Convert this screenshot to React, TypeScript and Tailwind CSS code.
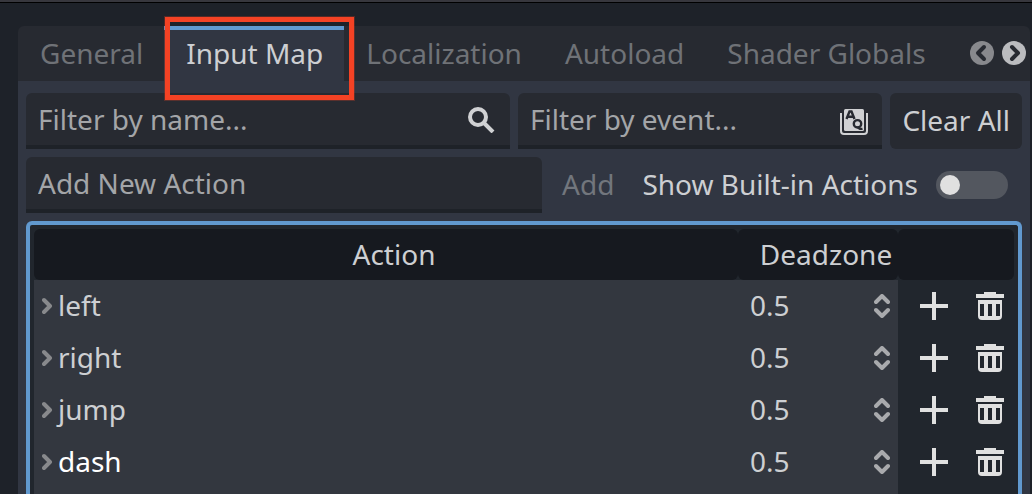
import { useState } from "react";

const tabs = ["General", "Input Map", "Localization", "Autoload", "Shader Globals"];

const actions = [
  { name: "left", deadzone: "0.5" },
  { name: "right", deadzone: "0.5" },
  { name: "jump", deadzone: "0.5" },
  { name: "dash", deadzone: "0.5", active: true },
];

function ArrowIcon({ back = false }: { back?: boolean }) {
  return (
    <svg width="24" height="24" viewBox="0 0 24 24" aria-hidden="true">
      <circle cx="12" cy="12" r="12" fill="currentColor" />
      <path
        d={back ? "M14 6 8 12l6 6" : "M10 6l6 6-6 6"}
        fill="none"
        stroke="#272a31"
        strokeWidth="4"
        strokeLinecap="round"
        strokeLinejoin="round"
      />
    </svg>
  );
}

function SearchIcon() {
  return (
    <svg width="28" height="28" viewBox="0 0 28 28" fill="none" stroke="#d0d1d3" aria-hidden="true">
      <circle cx="10" cy="12" r="8" strokeWidth="4" />
      <path d="M16 18l9 9" strokeWidth="4" />
    </svg>
  );
}

function KeyMatchIcon() {
  return (
    <svg width="28" height="32" viewBox="0 0 28 32" fill="none" aria-hidden="true">
      <path d="M1 10v18a3 3 0 0 0 3 3h20a3 3 0 0 0 3-3V10" stroke="#d0d1d3" strokeWidth="2" />
      <rect x="4" y="6" width="20" height="22" rx="1.500" fill="#d0d1d3" />
      <path d="M6.500 16l3-7.500h2l3 7.500M8 13.800h5" stroke="#272a31" strokeWidth="2.400" />
      <circle cx="17.500" cy="20.800" r="3.700" stroke="#272a31" strokeWidth="2.400" />
      <path d="M17.500 23.500c1 2.300 2.500 2.800 5 2.300" stroke="#272a31" strokeWidth="2.200" />
    </svg>
  );
}

function ChevronIcon() {
  return (
    <svg width="12" height="18" viewBox="0 0 12 18" className="shrink-0" aria-hidden="true">
      <path
        d="M2 3l6 6-6 6"
        fill="none"
        stroke="#88898c"
        strokeWidth="4"
        strokeLinecap="round"
        strokeLinejoin="round"
      />
    </svg>
  );
}

function UpDownIcon() {
  return (
    <svg width="16" height="24" viewBox="0 0 16 24" aria-hidden="true">
      <path
        d="M2 8l6-6 6 6M2 16l6 6 6-6"
        fill="none"
        stroke="#a9aaad"
        strokeWidth="4"
        strokeLinecap="round"
        strokeLinejoin="round"
      />
    </svg>
  );
}

function PlusIcon() {
  return (
    <svg width="28" height="28" viewBox="0 0 28 28" fill="#e0e0e0" aria-hidden="true">
      <path d="M12 0h4v12h12v4H16v12h-4V16H0v-4h12z" />
    </svg>
  );
}

function TrashIcon() {
  return (
    <svg width="28" height="28" viewBox="0 0 28 28" fill="#e0e0e0" aria-hidden="true">
      <path d="M8 0h12v2h8v4H0V2h8z" />
      <path
        fillRule="evenodd"
        d="M2 8h24v16a4 4 0 0 1-4 4H6a4 4 0 0 1-4-4zM4 12v12h4V12zM12 12v12h4V12zM20 12v12h4V12z"
      />
    </svg>
  );
}

const field =
  "flex h-14 min-w-0 items-center rounded-t-md border-b-4 border-[#1e2228] bg-[#272a31] pr-3.5 pl-3";
const fieldInput =
  "w-full min-w-0 flex-1 bg-transparent text-[#cdcfd2] outline-none placeholder:text-[#a3a5a8]";

export default function App() {
  const [active, setActive] = useState("Input Map");
  const [showBuiltIn, setShowBuiltIn] = useState(false);

  return (
    <main className="flex h-screen flex-col overflow-hidden border-t-2 border-[#37373d] bg-[#1e2229] font-['Noto_Sans',sans-serif] text-[28px] leading-9 text-[#cdcfd2]">
      <div className="h-px shrink-0 bg-black" />
      <div className="mt-[23px] mr-0.5 ml-[18px] flex min-h-0 flex-1 flex-col">
        <nav className="flex h-[55px] shrink-0 items-stretch rounded-t-md bg-[#272a31]" role="tablist">
          {tabs.map((tab) => (
            <div key={tab} className="relative flex">
              <button
                type="button"
                role="tab"
                aria-selected={tab === active}
                onClick={() => setActive(tab)}
                className={
                  tab === active
                    ? "border-t-4 border-[#6199cf] bg-[#313642] pr-[21px] pb-1.5 pl-[22px] whitespace-nowrap"
                    : "pr-[21px] pb-0.5 pl-[22px] whitespace-nowrap text-[#6f7277]"
                }
              >
                {tab}
              </button>
              {tab === "Input Map" && (
                <span className="pointer-events-none absolute -top-[9px] -right-2.5 -bottom-[19px] left-px border-[5px] border-[#f44224] outline outline-[#f4422440]" />
              )}
            </div>
          ))}
          <div className="ml-auto flex items-center gap-2 pr-1 pb-0.5">
            <button type="button" aria-label="Previous tabs" className="text-[#88898d]">
              <ArrowIcon back />
            </button>
            <button type="button" aria-label="Next tabs" className="text-[#bbbcbf]">
              <ArrowIcon />
            </button>
          </div>
        </nav>

        <section className="flex min-h-0 flex-1 flex-col gap-2 bg-[#313642] px-2 pt-3">
          <div className="flex shrink-0 gap-2">
            <label className={`${field} flex-[23]`}>
              <input aria-label="Filter by name" placeholder="Filter by name..." className={fieldInput} />
              <SearchIcon />
            </label>
            <label className={`${field} flex-[17]`}>
              <input aria-label="Filter by event" placeholder="Filter by event..." className={fieldInput} />
              <KeyMatchIcon />
            </label>
            <button type="button" className="h-14 rounded-md bg-[#272a31] px-3 pb-0.5 whitespace-nowrap">
              Clear All
            </button>
          </div>

          <div className="flex shrink-0 gap-2">
            <label className={`${field} flex-1`}>
              <input aria-label="Add New Action" placeholder="Add New Action" className={fieldInput} />
            </label>
            <button type="button" disabled className="px-3 pb-0.5 text-[#72767d]">
              Add
            </button>
            <label className="flex items-center gap-[18px] pr-3.5 pl-2 whitespace-nowrap">
              <span className="pb-0.5">Show Built-in Actions</span>
              <input
                type="checkbox"
                role="switch"
                checked={showBuiltIn}
                onChange={(e) => setShowBuiltIn(e.target.checked)}
                className="flex h-7 w-[72px] appearance-none items-center rounded-full bg-[#53575f] px-1 before:size-5 before:rounded-full before:bg-[#e0e0e0] checked:justify-end"
              />
            </label>
          </div>

          <div className="min-h-0 flex-1 overflow-hidden rounded-t-md border-4 border-b-0 border-[#6199cf] bg-[#21262d] px-1 pt-1">
            <table className="w-full table-fixed border-separate border-spacing-0">
              <colgroup>
                <col />
                <col className="w-40" />
                <col className="w-[116px]" />
              </colgroup>
              <thead>
                <tr className="h-[51px]">
                  <th className="rounded-md bg-[#16191f] p-0 pb-0.5 pl-4 font-normal">Action</th>
                  <th className="rounded-md bg-[#16191f] p-0 pb-0.5 pl-4 font-normal">Deadzone</th>
                  <th className="rounded-md bg-[#16191f] p-0" aria-label="Edit" />
                </tr>
              </thead>
              <tbody>
                {actions.map((action) => (
                  <tr key={action.name} className="h-[52px]">
                    <td className="bg-[#33373f] p-0 pl-2">
                      <div className="flex items-center gap-1">
                        <ChevronIcon />
                        <span className={action.active ? "pb-0.5 text-white" : "pb-0.5"}>
                          {action.name}
                        </span>
                      </div>
                    </td>
                    <td className="bg-[#33373f] p-0 pr-2 pl-3">
                      <div className="flex items-center justify-between">
                        <span className="pb-0.5">{action.deadzone}</span>
                        <button type="button" aria-label={`Change deadzone of ${action.name}`}>
                          <UpDownIcon />
                        </button>
                      </div>
                    </td>
                    <td className="p-0">
                      <div className="flex items-center justify-end gap-7 pr-2.5">
                        <button type="button" aria-label={`Add event to ${action.name}`}>
                          <PlusIcon />
                        </button>
                        <button type="button" aria-label={`Remove ${action.name}`}>
                          <TrashIcon />
                        </button>
                      </div>
                    </td>
                  </tr>
                ))}
                <tr className="h-[52px]" aria-hidden="true">
                  <td className="bg-[#33373f] p-0" />
                  <td className="bg-[#33373f] p-0" />
                  <td className="p-0" />
                </tr>
              </tbody>
            </table>
          </div>
        </section>
      </div>
    </main>
  );
}
